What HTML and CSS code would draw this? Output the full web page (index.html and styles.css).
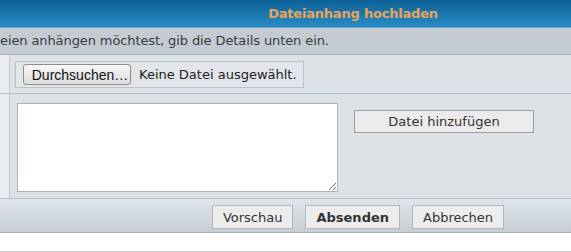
FILE: index.html
```html
<!DOCTYPE html>
<html lang="de">
<head>
    <meta charset="UTF-8">
    <title>Dateianhang hochladen</title>
    <link rel="stylesheet" href="styles.css">
</head>
<body>
    <div class="panel">
        <div class="panel-head">Dateianhang hochladen</div>
        <div class="panel-desc">eien anhängen möchtest, gib die Details unten ein.</div>

        <div class="row row-file">
            <div class="row-label"></div>
            <div class="row-body">
                <div class="file-box">
                    <button class="btn-browse" type="button">Durchsuchen…</button>
                    <span class="file-name">Keine Datei ausgewählt.</span>
                </div>
            </div>
        </div>

        <div class="row row-comment">
            <div class="row-label"></div>
            <div class="row-body">
                <textarea class="comment"></textarea>
                <button class="btn btn-add" type="button">Datei hinzufügen</button>
            </div>
        </div>

        <div class="panel-foot">
            <button class="btn" type="button">Vorschau</button>
            <button class="btn btn-main" type="button">Absenden</button>
            <button class="btn" type="button">Abbrechen</button>
        </div>
    </div>
    <div class="page-rest"></div>
</body>
</html>
```

FILE: styles.css
```css
* {
    margin: 0;
    padding: 0;
    box-sizing: border-box;
}

body {
    font-family: "DejaVu Sans", Verdana, sans-serif;
    font-size: 13px;
    color: #333;
    background: #fff;
    overflow: hidden;
}

.panel-head {
    height: 28px;
    padding-left: 135px;
    text-align: center;
    line-height: 27px;
    font-weight: bold;
    font-size: 13px;
    letter-spacing: -0.2px;
    color: #e9a45c;
    background: linear-gradient(#0c6197, #2a8cc5);
    border-bottom: 1px solid #6aa6cc;
}

.panel-desc {
    height: 27px;
    line-height: 26px;
    white-space: nowrap;
    letter-spacing: -0.1px;
    color: #383c40;
    background: #c4cbd2;
    border-bottom: 1px solid #a9b2bb;
}

.row {
    display: flex;
    border-bottom: 1px solid #b8c0c8;
    background: #dde2e7;
}

.row-label {
    width: 10px;
    background: #eaecef;
    border-right: 1px solid #c3c9cf;
}

.row-body {
    flex: 1;
    display: flex;
    align-items: flex-start;
}

.row-file {
    height: 39px;
}

.row-file .row-body {
    padding: 6px 0 0 5px;
}

.file-box {
    display: flex;
    align-items: center;
    gap: 8px;
    height: 27px;
    padding: 0 6px 0 7px;
    border: 1px solid #bac1c8;
    background: #e2e6ea;
}

.btn-browse {
    height: 21px;
    width: 108px;
    padding-left: 6px;
    font-family: "Liberation Sans", Arial, sans-serif;
    font-size: 14px;
    color: #111;
    background: linear-gradient(#f7f7f7, #dcdcdc);
    border: 1px solid #8c8c8c;
    border-radius: 3px;
}

.file-name {
    color: #222;
}

.row-comment {
    height: 105px;
}

.row-comment .row-body {
    padding: 9px 0 0 7px;
    gap: 16px;
}

.comment {
    width: 321px;
    height: 89px;
    border: 1px solid #aab2ba;
    background: #fff;
}

.btn {
    height: 24px;
    padding: 0 11px;
    font-family: "DejaVu Sans", Verdana, sans-serif;
    font-size: 13px;
    color: #333;
    background: #ececec;
    border: 1px solid #b4b8bc;
}

.btn-add {
    width: 180px;
    height: 23px;
    margin-top: 7px;
    background: #ebebeb;
    border-color: #9a9ea2;
}

.btn-main {
    font-weight: bold;
}

.panel-foot {
    display: flex;
    justify-content: center;
    gap: 12px;
    height: 34px;
    padding: 6px 0 0 145px;
    background: linear-gradient(#dfe4e9, #c6ced6);
    border-bottom: 1px solid #a9b1b9;
}

.panel-foot .btn {
    padding: 0 10px;
}

.page-rest {
    height: 19px;
    border-bottom: 1px solid #c8c8c8;
}
```
